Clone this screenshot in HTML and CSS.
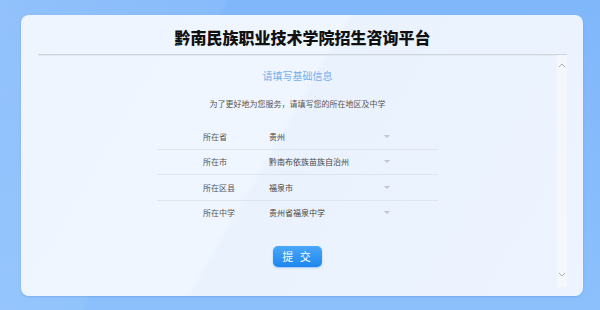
FILE: index.html
```html
<!DOCTYPE html>
<html lang="zh-CN">
<head>
    <meta charset="UTF-8">
    <meta name="viewport" content="width=device-width, initial-scale=1.0">
    <title>黔南民族职业技术学院招生咨询平台</title>
    <link rel="stylesheet" href="styles.css">
</head>
<body>
    <div class="page">
        <div class="card">
            <div class="card-head">
                <h1>黔南民族职业技术学院招生咨询平台</h1>
            </div>

            <div class="card-body">
                <div class="content">
                    <h2>请填写基础信息</h2>
                    <p class="hint">为了更好地为您服务，请填写您的所在地区及中学</p>

                    <!-- 地区及中学选择 -->
                    <div class="form-list">
                        <div class="form-row">
                            <span class="label">所在省</span>
                            <span class="value">贵州</span>
                            <span class="caret"></span>
                        </div>
                        <div class="form-row">
                            <span class="label">所在市</span>
                            <span class="value">黔南布依族苗族自治州</span>
                            <span class="caret"></span>
                        </div>
                        <div class="form-row">
                            <span class="label">所在区县</span>
                            <span class="value">福泉市</span>
                            <span class="caret"></span>
                        </div>
                        <div class="form-row last">
                            <span class="label">所在中学</span>
                            <span class="value">贵州省福泉中学</span>
                            <span class="caret"></span>
                        </div>
                    </div>

                    <div class="actions">
                        <button type="button" class="btn">提 交</button>
                    </div>
                </div>

                <!-- 滚动条 -->
                <div class="scrollbar">
                    <svg width="8" height="5" viewBox="0 0 8 5"><path d="M1 4 L4 1 L7 4" fill="none" stroke="#a9adb3" stroke-width="1"/></svg>
                    <svg width="8" height="5" viewBox="0 0 8 5"><path d="M1 1 L4 4 L7 1" fill="none" stroke="#a9adb3" stroke-width="1"/></svg>
                </div>
            </div>
        </div>
    </div>
</body>
</html>
```

FILE: styles.css
```css
body, html {
    margin: 0;
    padding: 0;
    height: 100%;
    font-family: "Noto Sans CJK SC", "Noto Sans", sans-serif;
}
.page {
    box-sizing: border-box;
    height: 310px;
    padding: 15px 17px 14px 21px;
    background:
        linear-gradient(115deg, rgba(255, 255, 255, 0.14) 0%, rgba(255, 255, 255, 0.06) 30%, rgba(255, 255, 255, 0) 31%),
        linear-gradient(180deg, #80b7fb 0%, #8bc0fc 100%);
}
.card {
    height: 100%;
    box-sizing: border-box;
    padding: 0 16px 9px 17px;
    border-radius: 8px;
    background: linear-gradient(120deg, #eef5ff 0%, #f0f6ff 45%, #eaf2fe 46%, #edf4ff 100%);
    box-shadow: 0 1px 2px rgba(60, 120, 200, 0.25);
    display: flex;
    flex-direction: column;
}
.card-head {
    height: 40px;
    box-sizing: border-box;
    padding-top: 10px;
    border-bottom: 1px solid #cdd4dd;
    box-shadow: 0 1px 0 #e4e9f0;
    text-align: center;
}
.card-head h1 {
    margin: 0;
    font-size: 16px;
    line-height: 24px;
    font-weight: 900;
    color: #111;
    letter-spacing: 0;
}
.card-body {
    flex: 1;
    display: flex;
    min-height: 0;
}
.content {
    flex: 1;
    text-align: center;
}
.content h2 {
    margin: 14px 0 0;
    font-size: 10px;
    line-height: 14px;
    font-weight: normal;
    color: #74aeee;
}
.hint {
    margin: 15px 0 0;
    font-size: 8px;
    line-height: 12px;
    color: #555;
}
.form-list {
    width: 281px;
    margin: 14px auto 0;
}
.form-row {
    height: 24.5px;
    display: flex;
    align-items: center;
    padding-left: 46px;
    border-bottom: 1px solid #dfe5ee;
    font-size: 8px;
    text-align: left;
}
.form-row.last {
    border-bottom-color: transparent;
}
.label {
    width: 66px;
    color: #555;
}
.value {
    flex: 1;
    color: #444;
}
.caret {
    width: 0;
    height: 0;
    margin-right: 48px;
    border-left: 3px solid transparent;
    border-right: 3px solid transparent;
    border-top: 3px solid #c2c6cc;
}
.actions {
    margin-top: 16px;
}
.btn {
    width: 49px;
    height: 21px;
    padding: 0;
    border: none;
    border-radius: 5px;
    background: linear-gradient(180deg, #4ca7f8 0%, #1c86ee 100%);
    box-shadow: 0 1px 2px rgba(20, 110, 220, 0.35);
    color: #fff;
    font-family: "Noto Sans CJK SC", sans-serif;
    font-size: 11px;
    letter-spacing: 2px;
    cursor: pointer;
}
.scrollbar {
    width: 10px;
    background-color: #f5f7fa;
    display: flex;
    flex-direction: column;
    justify-content: space-between;
    align-items: center;
    padding: 8px 0 10px;
}
```
